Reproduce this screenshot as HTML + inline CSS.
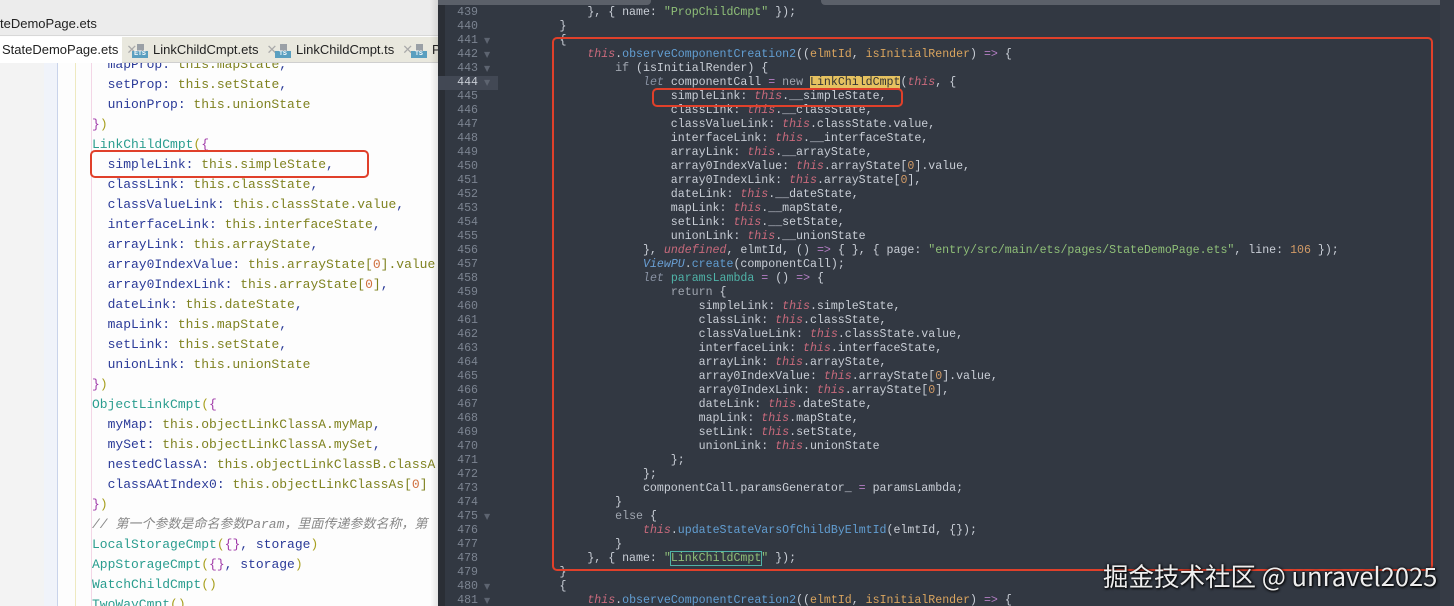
<!DOCTYPE html>
<html><head><meta charset="utf-8"><style>
*{margin:0;padding:0;box-sizing:border-box}
body{width:1454px;height:606px;overflow:hidden;position:relative;background:#fff;font-family:"Liberation Sans","Noto Sans CJK SC",sans-serif}
#L{position:absolute;left:0;top:0;width:440px;height:606px;background:#fdfdfd;overflow:hidden}
#title{position:absolute;left:0;top:0;width:440px;height:36px;background:#ececec;border-bottom:1px solid #d8d8d8;font-size:13px;color:#222;padding:16px 0 0 0}
#tabs{position:absolute;left:0;top:37px;width:440px;height:26px;background:#e9e8de;border-bottom:1px solid #cfcfcf;font-size:13px;color:#222}
.tab{position:absolute;top:0;height:26px;line-height:26px;white-space:nowrap}
.x{color:#aaa;margin-left:8px}
.ic{display:inline-block;width:16px;height:14px;vertical-align:middle;margin-right:5px;position:relative}
.ic i{position:absolute;left:0;bottom:0;width:16px;height:7px;background:#5a9fc0;color:#fff;font-size:6px;line-height:7px;font-style:normal;text-align:center;font-weight:bold}
.ic b{position:absolute;left:5px;top:0;width:7px;height:7px;background:#9aa0a6}
#lg{position:absolute;left:0;top:63px;width:44px;height:543px;background:#f3f3f3}
#lcode{position:absolute;left:92px;top:55px;font:13px/20px "Liberation Mono","Noto Sans CJK SC",monospace;white-space:pre;color:#2a3a98}
.t{color:#7f8220}.c{color:#2a9d8f}.b{color:#a03aa8}.p{color:#a8a020}.n{color:#d07040}.cm{color:#888;font-style:italic}
#R{position:absolute;left:438px;top:0;width:1016px;height:606px;background:#323842;overflow:hidden}
#rg{position:absolute;left:0;top:6px;width:62px;font:11.6px/14px "Liberation Mono",monospace;white-space:pre;color:#7c8491;text-align:right;padding-right:22px}
#ar{position:absolute;left:46px;top:6px;font:8px/14px "DejaVu Sans",sans-serif;white-space:pre;color:#5d6470}
#rcode{position:absolute;left:38px;top:6px;font:11.6px/14px "Liberation Mono",monospace;white-space:pre;color:#c9ced6}
.th{color:#c96a7c;font-style:italic}.fn{color:#629ed2}.pa{color:#d9a45e}.op{color:#b57ec4}.kw{color:#a0a6b0}.kwi{color:#8a93a4;font-style:italic}.tl{color:#4fb3a8}.s{color:#8fbf78}.num{color:#d19a66}.un{color:#c96a7c;font-style:italic}.cls{color:#6a9fd4;font-style:italic}
.hl{background:#e6c260;color:#333}
.box{position:absolute;border:2px solid #e0402a;border-radius:5px}
#wm{position:absolute;left:1103px;top:557px;font:25.5px "Noto Sans CJK SC",sans-serif;color:#eee;text-shadow:0 0 3px #000,1px 1px 2px #000;white-space:nowrap}
</style></head><body>
<div id="L">
<div id="lg"></div>
<div style="position:absolute;left:44px;top:63px;width:14px;height:543px;background:#f0f3fa;border-right:1px solid #c9d3ea"></div>
<div style="position:absolute;left:75px;top:63px;width:1px;height:543px;background:#eee9c0"></div>
<div style="position:absolute;left:91px;top:63px;width:1px;height:543px;background:#f3d6e6"></div>
<div id="lcode">  mapProp: <span class="t">this.mapState</span>,
  setProp: <span class="t">this.setState</span>,
  unionProp: <span class="t">this.unionState</span>
<span class="b">}</span><span class="p">)</span>
<span class="c">LinkChildCmpt</span><span class="p">(</span><span class="b">{</span>
  simpleLink: <span class="t">this.simpleState</span>,
  classLink: <span class="t">this.classState</span>,
  classValueLink: <span class="t">this.classState.value</span>,
  interfaceLink: <span class="t">this.interfaceState</span>,
  arrayLink: <span class="t">this.arrayState</span>,
  array0IndexValue: <span class="t">this.arrayState[<span class="n">0</span>].value</span>
  array0IndexLink: <span class="t">this.arrayState[<span class="n">0</span>]</span>,
  dateLink: <span class="t">this.dateState</span>,
  mapLink: <span class="t">this.mapState</span>,
  setLink: <span class="t">this.setState</span>,
  unionLink: <span class="t">this.unionState</span>
<span class="b">}</span><span class="p">)</span>
<span class="c">ObjectLinkCmpt</span><span class="p">(</span><span class="b">{</span>
  myMap: <span class="t">this.objectLinkClassA.myMap</span>,
  mySet: <span class="t">this.objectLinkClassA.mySet</span>,
  nestedClassA: <span class="t">this.objectLinkClassB.classA</span>
  classAAtIndex0: <span class="t">this.objectLinkClassAs[<span class="n">0</span>]</span>
<span class="b">}</span><span class="p">)</span>
<span class="cm">// 第一个参数是命名参数Param，里面传递参数名称，第</span>
<span class="c">LocalStorageCmpt</span><span class="p">(</span><span class="b">{}</span>, storage<span class="p">)</span>
<span class="c">AppStorageCmpt</span><span class="p">(</span><span class="b">{}</span>, storage<span class="p">)</span>
<span class="c">WatchChildCmpt</span><span class="p">()</span>
<span class="c">TwoWayCmpt</span><span class="p">()</span></div>
<div id="title">teDemoPage.ets</div>
<div id="tabs">
<div class="tab" style="left:0;width:122px;background:#fff;padding-left:2px">StateDemoPage.ets<span class="x">✕</span></div>
<div class="tab" style="left:132px"><span class="ic"><b></b><i>ETS</i></span>LinkChildCmpt.ets<span class="x">✕</span></div>
<div class="tab" style="left:275px"><span class="ic"><b></b><i>TS</i></span>LinkChildCmpt.ts<span class="x">✕</span></div>
<div class="tab" style="left:411px"><span class="ic"><b></b><i>TS</i></span>Pr</div>
</div>
<div class="box" style="left:90px;top:150px;width:279px;height:28px"></div>
<div style="position:absolute;left:430px;top:0;width:10px;height:606px;background:linear-gradient(90deg,rgba(0,0,0,0),rgba(0,0,0,.12))"></div>
</div>
<div id="R">
<div style="position:absolute;left:0;top:0;width:7px;height:606px;background:#2a2e35"></div>
<div style="position:absolute;left:0;top:0;width:213px;height:5px;background:#5b6069;border-radius:0 0 4px 0"></div>
<div style="position:absolute;left:383px;top:0;width:633px;height:5px;background:#5b6069;border-radius:0 0 0 4px"></div>
<div style="position:absolute;left:0;top:76px;width:60px;height:14px;background:#424854"></div>
<div style="position:absolute;left:1002px;top:0;width:14px;height:606px;background:#363b45"></div>
<div id="rg">439
440
441
442
443
<span style="color:#c9ced6">444</span>
445
446
447
448
449
450
451
452
453
454
455
456
457
458
459
460
461
462
463
464
465
466
467
468
469
470
471
472
473
474
475
476
477
478
479
480
481</div>
<div id="ar">

▼
▼
▼
▼






























▼




▼
▼</div>
<div id="rcode">                }, { name: <span class="s">"PropChildCmpt"</span> });
            }
            {
                <span class="th">this</span>.<span class="fn">observeComponentCreation2</span>((<span class="pa">elmtId</span>, <span class="pa">isInitialRender</span>) <span class="op">=&gt;</span> {
                    <span class="kw">if</span> (isInitialRender) {
                        <span class="kwi">let</span> componentCall <span class="op">=</span> <span class="kw">new</span> <span class="hl">LinkChildCmpt</span>(<span class="th">this</span>, {
                            simpleLink: <span class="th">this</span>.__simpleState,
                            classLink: <span class="th">this</span>.__classState,
                            classValueLink: <span class="th">this</span>.classState.value,
                            interfaceLink: <span class="th">this</span>.__interfaceState,
                            arrayLink: <span class="th">this</span>.__arrayState,
                            array0IndexValue: <span class="th">this</span>.arrayState[<span class="num">0</span>].value,
                            array0IndexLink: <span class="th">this</span>.arrayState[<span class="num">0</span>],
                            dateLink: <span class="th">this</span>.__dateState,
                            mapLink: <span class="th">this</span>.__mapState,
                            setLink: <span class="th">this</span>.__setState,
                            unionLink: <span class="th">this</span>.__unionState
                        }, <span class="un">undefined</span>, elmtId, () <span class="op">=&gt;</span> { }, { page: <span class="s">"entry/src/main/ets/pages/StateDemoPage.ets"</span>, line: <span class="num">106</span> });
                        <span class="cls">ViewPU</span>.<span class="fn">create</span>(componentCall);
                        <span class="kwi">let</span> <span class="tl">paramsLambda</span> <span class="op">=</span> () <span class="op">=&gt;</span> {
                            <span class="kw">return</span> {
                                simpleLink: <span class="th">this</span>.simpleState,
                                classLink: <span class="th">this</span>.classState,
                                classValueLink: <span class="th">this</span>.classState.value,
                                interfaceLink: <span class="th">this</span>.interfaceState,
                                arrayLink: <span class="th">this</span>.arrayState,
                                array0IndexValue: <span class="th">this</span>.arrayState[<span class="num">0</span>].value,
                                array0IndexLink: <span class="th">this</span>.arrayState[<span class="num">0</span>],
                                dateLink: <span class="th">this</span>.dateState,
                                mapLink: <span class="th">this</span>.mapState,
                                setLink: <span class="th">this</span>.setState,
                                unionLink: <span class="th">this</span>.unionState
                            };
                        };
                        componentCall.paramsGenerator_ <span class="op">=</span> paramsLambda;
                    }
                    <span class="kw">else</span> {
                        <span class="th">this</span>.<span class="fn">updateStateVarsOfChildByElmtId</span>(elmtId, {});
                    }
                }, { name: <span class="s">"<span style="outline:1px solid #4fb3a8">LinkChildCmpt</span>"</span> });
            }
            {
                <span class="th">this</span>.<span class="fn">observeComponentCreation2</span>((<span class="pa">elmtId</span>, <span class="pa">isInitialRender</span>) <span class="op">=&gt;</span> {</div>
<div class="box" style="left:114px;top:37px;width:881px;height:534px"></div>
<div class="box" style="left:214px;top:88px;width:251px;height:19px"></div>
</div>
<div id="wm">掘金技术社区 @ unravel2025</div>
</body></html>
